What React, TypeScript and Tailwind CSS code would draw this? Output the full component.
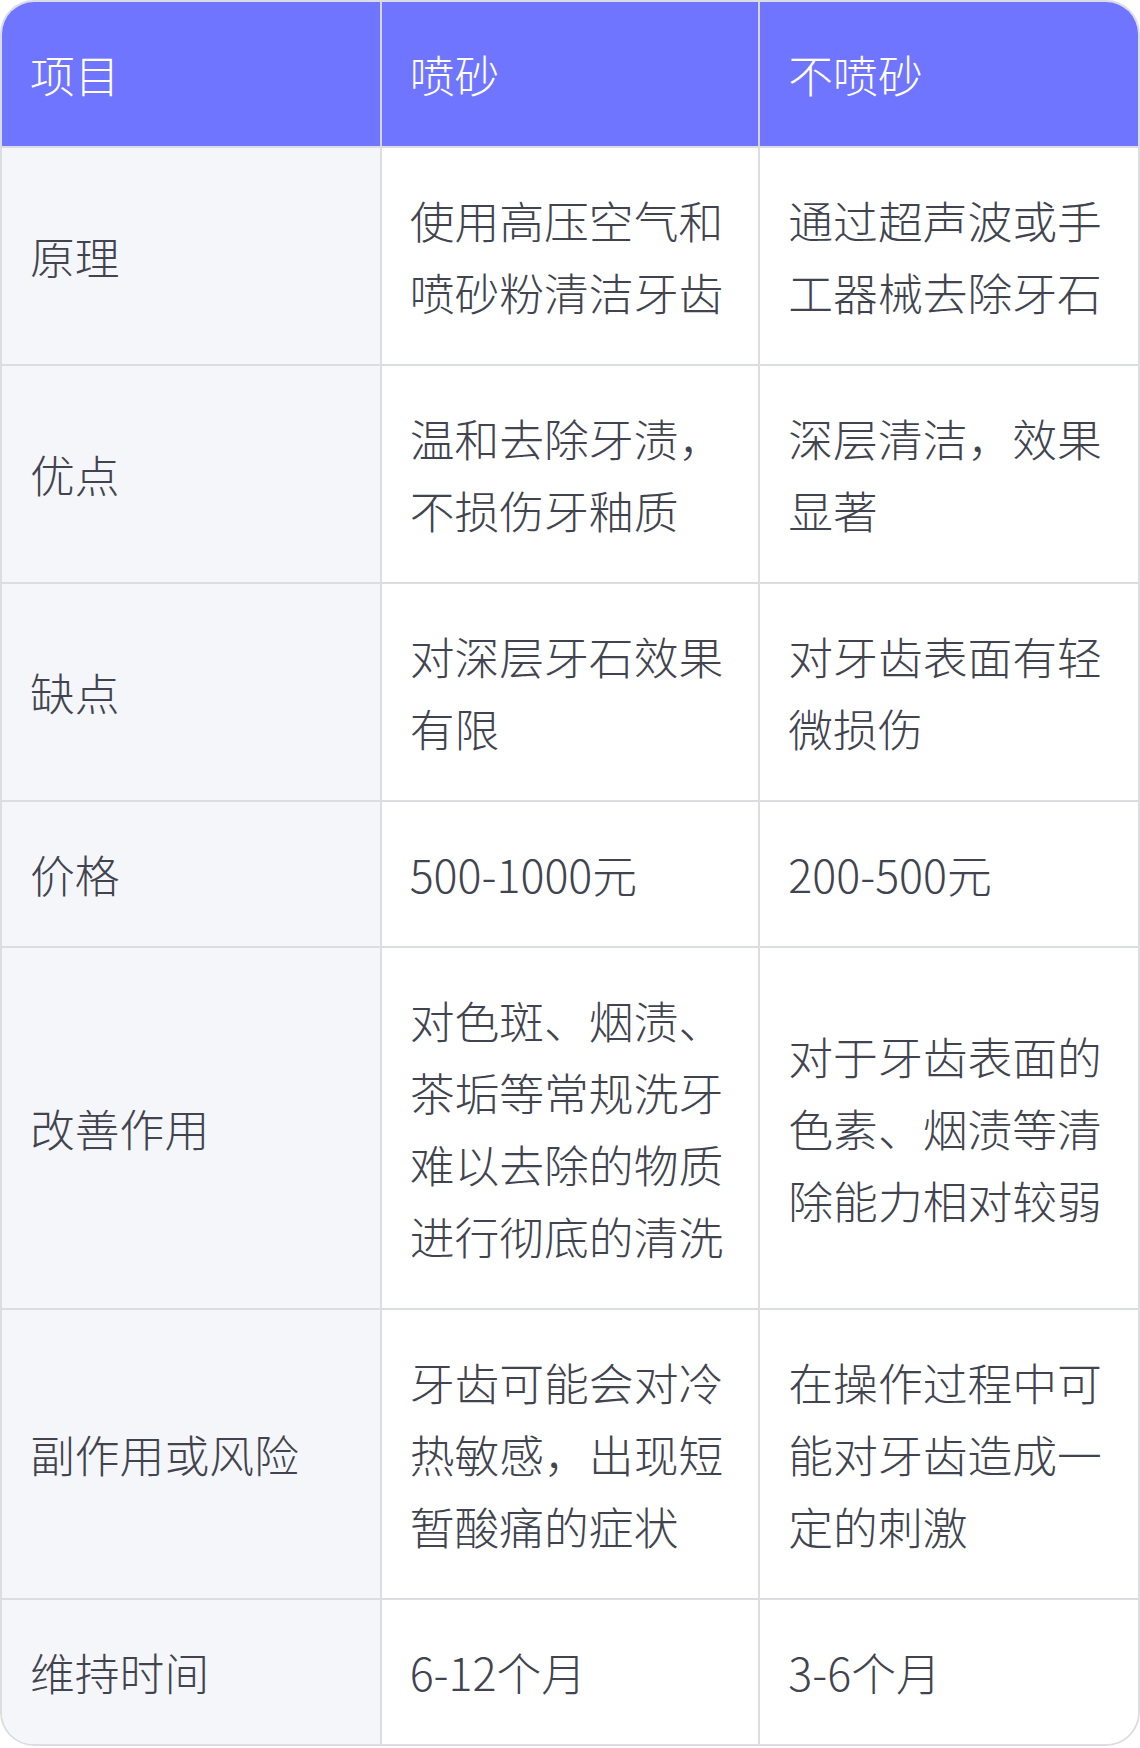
const header = ['项目', '喷砂', '不喷砂']

const rows: string[][] = [
  ['原理', '使用高压空气和喷砂粉清洁牙齿', '通过超声波或手工器械去除牙石'],
  ['优点', '温和去除牙渍，不损伤牙釉质', '深层清洁，效果显著'],
  ['缺点', '对深层牙石效果有限', '对牙齿表面有轻微损伤'],
  ['价格', '500-1000元', '200-500元'],
  ['改善作用', '对色斑、烟渍、茶垢等常规洗牙难以去除的物质进行彻底的清洗', '对于牙齿表面的色素、烟渍等清除能力相对较弱'],
  ['副作用或风险', '牙齿可能会对冷热敏感，出现短暂酸痛的症状', '在操作过程中可能对牙齿造成一定的刺激'],
  ['维持时间', '6-12个月', '3-6个月'],
]

export default function App() {
  return (
    <div className="w-[1140px] bg-white font-['Noto_Sans_CJK_SC',sans-serif]">
      <div className="overflow-hidden rounded-[34px] border-2 border-[#dcdde3]">
        <table className="w-full table-fixed border-collapse text-[44.8px] leading-[72px] font-light">
          <thead>
            <tr className="bg-[#7075ff] text-white">
              {header.map((h, i) => (
                <th
                  key={h}
                  className={`px-[28px] py-[36px] text-left font-light border-b-2 border-[#dcdde3] ${
                    i < 2 ? 'border-r-2 border-r-[#d4d6f0]' : ''
                  }`}
                >
                  {h}
                </th>
              ))}
            </tr>
          </thead>
          <tbody className="text-[#41444f]">
            {rows.map((r, ri) => (
              <tr key={r[0]}>
                {r.map((c, ci) => (
                  <td
                    key={ci}
                    className={`px-[28px] py-[36px] align-middle border-[#dcdde3] ${
                      ci === 0 ? 'bg-[#f5f6fa]' : 'bg-white'
                    } ${ci < 2 ? 'border-r-2' : ''} ${ri < rows.length - 1 ? 'border-b-2' : ''}`}
                  >
                    {c}
                  </td>
                ))}
              </tr>
            ))}
          </tbody>
        </table>
      </div>
    </div>
  )
}
